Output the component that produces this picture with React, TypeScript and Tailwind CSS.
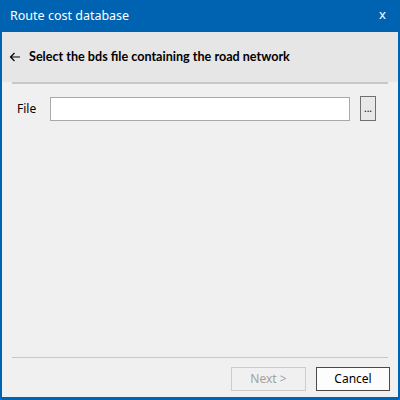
import React from "react";

const font = { fontFamily: '"Segoe UI", "Noto Sans", "Liberation Sans", sans-serif' };
const heading = { fontFamily: 'Lato, "Noto Sans", sans-serif' };

const App = () => {
  return (
    <div
      className="w-[400px] h-[400px] flex flex-col bg-[#0063b1] px-[2px] pb-[3px] text-[12px] text-black"
      style={font}
    >
      {/* title bar */}
      <div className="h-[32px] flex items-center justify-between pl-[8px] pr-[12px] text-white">
        <span className="text-[12.5px]">Route cost database</span>
        <span className="text-[13px] pb-[2px]">x</span>
      </div>

      <div className="flex-1 flex flex-col bg-[#f0f0f0]">
        {/* header */}
        <div className="h-[50px] flex items-center gap-[8px] bg-[#e6e6e6] pl-[7px]">
          <svg width="12" height="12" viewBox="0 0 12 12" fill="none" stroke="#000" strokeWidth="1.2">
            <path d="M11 6H1.5M5.5 2L1.5 6l4 4" />
          </svg>
          <span className="font-bold text-[12.6px]" style={heading}>
            Select the bds file containing the road network
          </span>
        </div>
        <div className="mx-[10px] h-[2px] bg-[#c8c8c8]" />

        {/* content */}
        <div className="flex items-center pl-[15px] pr-[22px] pt-[12px]">
          <span className="w-[33px]">File</span>
          <div className="flex-1 h-[24px] bg-white border border-[#a9a9a9]" />
          <button className="ml-[10px] w-[16px] h-[25px] border border-[#707070] bg-[#e8e8e8] text-[10px] leading-none pb-[2px]">
            ...
          </button>
        </div>

        <div className="flex-1" />

        {/* footer */}
        <div className="mx-[10px] h-[1px] bg-[#c8c8c8]" />
        <div className="flex justify-end gap-[10px] pt-[9px] pb-[6px] pr-[8px]">
          <button className="w-[75px] h-[24px] border border-[#cccccc] bg-[#f0f0f0] text-[#a0a0a0]">
            Next &gt;
          </button>
          <button className="w-[74px] h-[24px] border border-[#4a4a4a] bg-[#fdfdfd]">
            Cancel
          </button>
        </div>
      </div>
    </div>
  );
};

export default App;
